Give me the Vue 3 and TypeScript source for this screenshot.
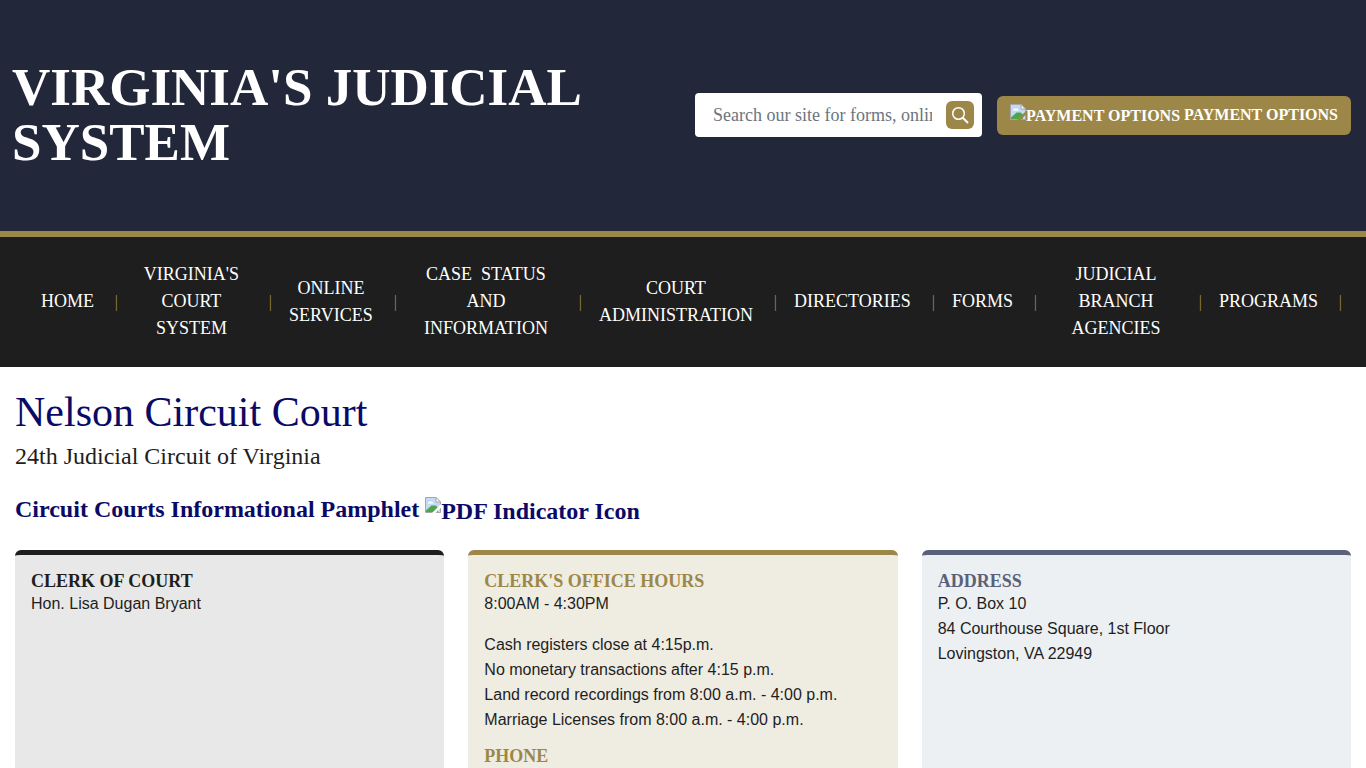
<script setup lang="ts">
import { ref } from 'vue'

interface CardSection {
  title: string
  blocks: string[][]
}

interface InfoCard {
  tone: string
  sections: CardSection[]
}

const query = ref('')

const navItems: string[] = [
  'Home',
  "Virginia's Court System",
  'Online Services',
  'Case\u00a0 Status and Information',
  'Court Administration',
  'Directories',
  'Forms',
  'Judicial Branch Agencies',
  'Programs',
]

const cards: InfoCard[] = [
  {
    tone: 'dark',
    sections: [{ title: 'Clerk of Court', blocks: [['Hon. Lisa Dugan Bryant']] }],
  },
  {
    tone: 'gold',
    sections: [
      {
        title: "Clerk's Office Hours",
        blocks: [
          ['8:00AM - 4:30PM'],
          [
            'Cash registers close at 4:15p.m.',
            'No monetary transactions after 4:15 p.m.',
            'Land record recordings from 8:00 a.m. - 4:00 p.m.',
            'Marriage Licenses from 8:00 a.m. - 4:00 p.m.',
          ],
        ],
      },
      { title: 'Phone', blocks: [] },
    ],
  },
  {
    tone: 'slate',
    sections: [
      {
        title: 'Address',
        blocks: [['P. O. Box 10', '84 Courthouse Square, 1st Floor', 'Lovingston, VA 22949']],
      },
    ],
  },
]
</script>

<template>
  <div class="page">
    <header class="masthead">
      <h1 class="site-title">Virginia's Judicial System</h1>
      <div class="tools">
        <form class="search" role="search" @submit.prevent>
          <input
            v-model="query"
            type="text"
            aria-label="Search our site"
            placeholder="Search our site for forms, online services"
          />
          <button type="submit" aria-label="Search">
            <svg width="18" height="18" viewBox="0 0 18 18" fill="none" stroke="#fff" stroke-width="1.5">
              <circle cx="7.5" cy="7.5" r="5.8" />
              <path d="M11.8 11.8 17 17" stroke-width="2" />
            </svg>
          </button>
        </form>
        <a class="payment" href="#">
          <span class="missing">
            <svg width="16" height="16" viewBox="0 0 16 16">
              <path d="M.5.5H11L15.5 5v10.500H.5Z" fill="#c5d9f7" stroke="#a6a6a6" />
              <path d="M11 .5V5h4.500Z" fill="#fff" stroke="#a6a6a6" />
              <path d="M3 6.500a2 2 0 0 1 3-1.800 2 2 0 0 1 2.500 1.800Z" fill="#fff" />
              <path d="M1 15v-1.500l5.500-5h4L13 10.500V15Z" fill="#4ca64c" />
              <path d="M16 7 7 16h3.500L16 10.500Z" class="cut" />
            </svg>Payment Options</span>
          <span>Payment Options</span>
        </a>
      </div>
    </header>

    <nav class="main-nav" aria-label="Main">
      <ul>
        <li v-for="item in navItems" :key="item">
          <a href="#">{{ item }}</a>
          <span class="bar">|</span>
        </li>
      </ul>
    </nav>

    <main>
      <h2 class="court">Nelson Circuit Court</h2>
      <p class="circuit">24th Judicial Circuit of Virginia</p>
      <p class="pamphlet">
        <a href="#">
          <span>Circuit Courts Informational Pamphlet</span>
          <span class="missing">
            <svg width="16" height="16" viewBox="0 0 16 16">
              <path d="M.5.5H11L15.5 5v10.500H.5Z" fill="#c5d9f7" stroke="#a6a6a6" />
              <path d="M11 .5V5h4.500Z" fill="#fff" stroke="#a6a6a6" />
              <path d="M3 6.500a2 2 0 0 1 3-1.800 2 2 0 0 1 2.500 1.800Z" fill="#fff" />
              <path d="M1 15v-1.500l5.500-5h4L13 10.500V15Z" fill="#4ca64c" />
              <path d="M16 7 7 16h3.500L16 10.500Z" class="cut" />
            </svg>PDF Indicator Icon</span>
        </a>
      </p>
      <div class="cards">
        <section v-for="card in cards" :key="card.tone" class="card" :class="card.tone">
          <div v-for="section in card.sections" :key="section.title" class="section">
            <h3>{{ section.title }}</h3>
            <p v-for="(block, i) in section.blocks" :key="i">
              <span v-for="line in block" :key="line">{{ line }}</span>
            </p>
          </div>
        </section>
      </div>
    </main>
  </div>
</template>

<style>
html {
  overflow: hidden;
}

body {
  margin: 0;
  background: #fff;
}
</style>

<style scoped>
* {
  box-sizing: border-box;
}

.page {
  height: 100vh;
  overflow: hidden;
  display: flex;
  flex-direction: column;
  font-family: "Liberation Serif", "Times New Roman", serif;
  color: #1e1e1e;
}

h1,
h2,
h3,
p,
ul {
  margin: 0;
  padding: 0;
}

a {
  text-decoration: none;
}

.masthead {
  display: flex;
  align-items: center;
  gap: 24px;
  padding: 60px 15px 61px 12px;
  background: #22273a;
  border-bottom: 6px solid #9c8748;
}

.site-title {
  flex: 1;
  color: #fff;
  font-size: 53px;
  line-height: 55px;
  text-transform: uppercase;
}

.tools {
  display: flex;
  align-items: center;
  gap: 15px;
}

.search {
  display: flex;
  align-items: center;
  width: 287px;
  height: 44px;
  padding: 0 8px 0 18px;
  gap: 14px;
  background: #fff;
  border-radius: 4px;
}

.search input {
  flex: 1;
  min-width: 0;
  padding: 0;
  border: 0;
  outline: 0;
  background: none;
  color: #1e1e1e;
  font: 18px/28px "Liberation Serif", "Times New Roman", serif;
}

.search input::placeholder {
  color: #6c757d;
  opacity: 1;
}

.search button {
  display: grid;
  place-items: center;
  width: 28px;
  height: 28px;
  padding: 0;
  border: 0;
  border-radius: 6px;
  background: #9c8748;
}

.payment {
  display: flex;
  gap: 4px;
  height: 39px;
  padding: 7px 13px;
  border-radius: 6px;
  background: #9c8748;
  color: #fff;
  font-size: 16px;
  font-weight: bold;
  line-height: 24px;
  text-transform: uppercase;
  white-space: nowrap;
}

.missing {
  display: inline-flex;
  align-items: flex-start;
}

.payment .missing {
  padding-top: 1px;
}

.cut {
  fill: #fff;
}

.payment .cut {
  fill: #9c8748;
}

.main-nav {
  padding: 24px 24px 25px 20px;
  background: #1e1e1e;
}

.main-nav ul {
  display: grid;
  grid-template-columns: 98fr 154fr 125fr 185fr 195fr 158fr 102fr 165fr 140fr;
  list-style: none;
}

.main-nav li {
  display: flex;
  align-items: center;
}

.main-nav a {
  flex: 1;
  padding: 0 18px 0 14px;
  color: #fff;
  font-size: 18px;
  line-height: 27px;
  text-align: center;
  text-transform: uppercase;
}

.main-nav li:first-child a {
  padding: 0 16px;
}

.bar {
  color: #9c8748;
  font-size: 16px;
  line-height: 27px;
}

main {
  flex: 1;
  display: flex;
  flex-direction: column;
  padding: 20px 15px 0;
}

.court {
  color: #0a0a66;
  font-size: 42px;
  font-weight: normal;
  line-height: 51px;
}

.circuit {
  font-size: 24px;
  line-height: 36px;
}

.pamphlet {
  margin: 17px 0 21px;
  font-size: 24px;
  font-weight: bold;
  line-height: 36px;
}

.pamphlet a {
  display: flex;
  gap: 6px;
  color: #0a0a66;
}

.pamphlet .missing {
  padding-top: 2px;
}

.pamphlet svg {
  margin-top: 4px;
}

.cards {
  flex: 1;
  display: grid;
  grid-template-columns: repeat(3, 1fr);
  gap: 24px;
}

.card {
  padding: 16px;
  border-top: 5px solid;
  border-radius: 6px;
}

.card h3 {
  font-size: 18px;
  line-height: 20px;
  text-transform: uppercase;
}

.card p {
  margin-bottom: 16px;
  color: #1e1e1e;
  font: 16px/25px "Liberation Sans", Arial, sans-serif;
}

.card p:last-child {
  margin-bottom: 14px;
}

.card p span {
  display: block;
}

.dark {
  background: #e8e8e8;
  color: #1e1e1e;
}

.gold {
  background: #efece2;
  border-color: #9c8748;
  color: #9c8748;
}

.slate {
  background: #ecf0f3;
  border-color: #5b6178;
  color: #5b6178;
}
</style>
